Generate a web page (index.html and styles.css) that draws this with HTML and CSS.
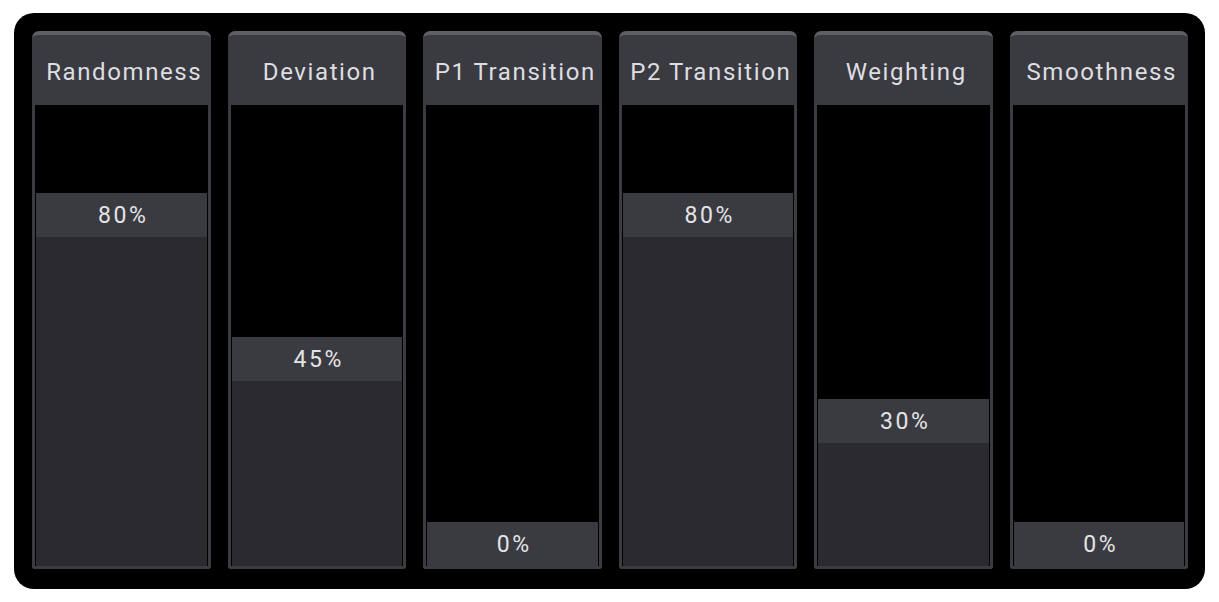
FILE: index.html
```html
<!DOCTYPE html>
<html>
<head>
<meta charset="utf-8">
<link rel="stylesheet" href="styles.css">
</head>
<body>
<div class="panel">
  <div class="col">
    <div class="head">Randomness</div>
    <div class="track"><div class="fill" style="--p:80"><div class="val">80%</div></div></div>
  </div>
  <div class="col">
    <div class="head">Deviation</div>
    <div class="track"><div class="fill" style="--p:45"><div class="val">45%</div></div></div>
  </div>
  <div class="col">
    <div class="head">P1 Transition</div>
    <div class="track"><div class="fill" style="--p:0"><div class="val">0%</div></div></div>
  </div>
  <div class="col">
    <div class="head">P2 Transition</div>
    <div class="track"><div class="fill" style="--p:80"><div class="val">80%</div></div></div>
  </div>
  <div class="col">
    <div class="head">Weighting</div>
    <div class="track"><div class="fill" style="--p:30"><div class="val">30%</div></div></div>
  </div>
  <div class="col">
    <div class="head">Smoothness</div>
    <div class="track"><div class="fill" style="--p:0"><div class="val">0%</div></div></div>
  </div>
</div>
</body>
</html>
```

FILE: styles.css
```css
html, body {
  margin: 0;
  background: #ffffff;
}
body {
  padding: 13px 14px;
  font-family: Roboto, "Liberation Sans", sans-serif;
}
.panel {
  width: 1191px;
  height: 576px;
  box-sizing: border-box;
  background: #000;
  border-radius: 20px;
  padding: 18px 17px 20px 18px;
  display: flex;
  gap: 17px;
}
.col {
  flex: 1 1 0;
  min-width: 0;
  display: flex;
  flex-direction: column;
}
.head {
  height: 74px;
  flex: none;
  border-top: 4px solid #5e5e63;
  border-radius: 7px 7px 0 0;
  background: #3a3a41;
  color: #dedee0;
  font-size: 24px;
  letter-spacing: 1.6px;
  display: flex;
  align-items: center;
  justify-content: center;
  white-space: nowrap;
  padding: 3px 0 0 6px;
  box-sizing: border-box;
}
.track {
  flex: 1;
  border: 3px solid #3b3b42;
  border-top: none;
  border-radius: 0 0 3px 3px;
  background: #000;
  padding: 0 1px;
  display: flex;
  flex-direction: column;
  justify-content: flex-end;
}
.fill {
  height: calc(44px + var(--p) * 4.11px);
  background: #2b2b2f;
  display: flex;
  flex-direction: column;
}
.val {
  height: 44px;
  flex: none;
  background: #3a3a41;
  color: #e4e4e6;
  font-size: 23px;
  letter-spacing: 2.6px;
  display: flex;
  align-items: center;
  justify-content: center;
  padding: 1px 0 0 4px;
  box-sizing: border-box;
}
```
